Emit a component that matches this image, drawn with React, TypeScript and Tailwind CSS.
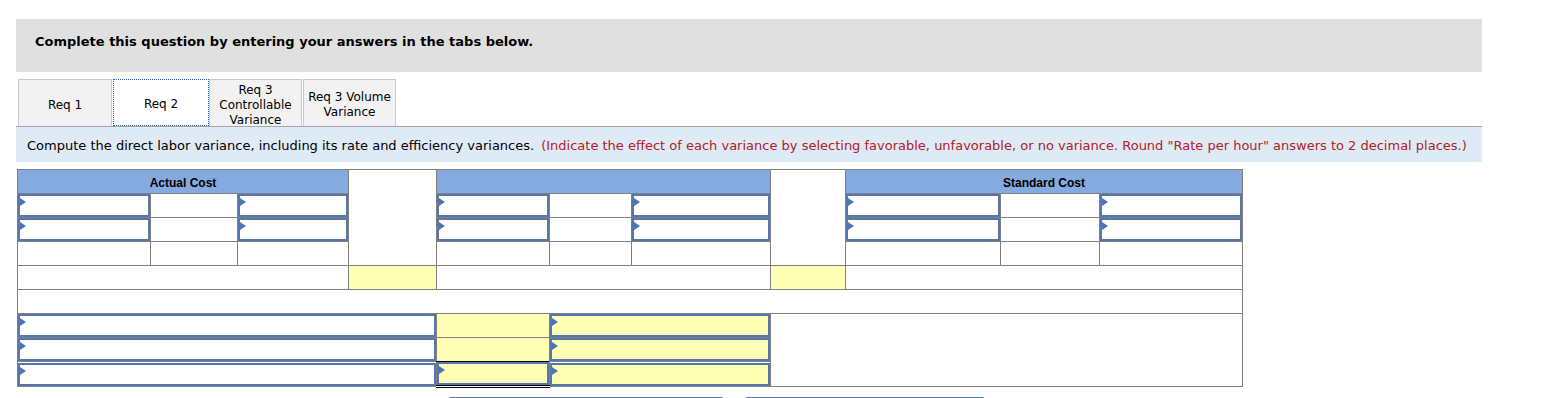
import React from 'react';

const cell = 'h-[24px] p-0 border border-[#808080]';
const yellow = 'bg-[#ffffb6]';

const Arrow = () => (
  <span className="absolute left-0 top-[2px] h-0 w-0 border-y-[4px] border-y-transparent border-l-[6px] border-l-[#4c74b8]" />
);

const InputBox = ({ bg = 'bg-white', arrow = true }: { bg?: string; arrow?: boolean }) => (
  <div className={`relative h-[23px] border-2 border-[#5577aa] ${bg}`}>{arrow && <Arrow />}</div>
);

const tabs = [
  { label: ['Req 1'], w: 'w-[94px]' },
  { label: ['Req 2'], w: 'w-[96px]', active: true },
  { label: ['Req 3', 'Controllable', 'Variance'], w: 'w-[93px]' },
  { label: ['Req 3 Volume', 'Variance'], w: 'w-[93px]' },
];

export default function App() {
  return (
    <div className="w-[1544px] h-[398px] overflow-hidden bg-white font-['DejaVu_Sans',Verdana,sans-serif] text-black">
      <div className="pt-[19px] pl-[16px] w-[1482px]">
        <div className="h-[53px] bg-[#e0e0e0] flex items-center pl-[19px] pb-[8px] text-[13px] font-bold">
          Complete this question by entering your answers in the tabs below.
        </div>

        <div className="mt-[7px] flex items-stretch h-[48px] pl-[2px] border-b border-[#a6a6a6] text-[12px] leading-[15px]">
          {tabs.map((t, i) => (
            <div
              key={i}
              className={`${t.w} flex flex-col items-center justify-center text-center pt-[4px] ${
                t.active
                  ? 'bg-white border border-dotted border-[#2160c4]'
                  : 'bg-[#f2f2f2] border border-b-0 border-[#c9c9c9] mr-[1px]'
              }`}
            >
              {t.label.map((l, j) => (
                <span key={j}>{l}</span>
              ))}
            </div>
          ))}
        </div>

        <div className="h-[35px] bg-[#dfeaf7] flex items-center pl-[11px] pt-[3px] text-[13px]">
          <span>Compute the direct labor variance, including its rate and efficiency variances.</span>
          <span className="ml-[7px] text-[#b3201f]">
            (Indicate the effect of each variance by selecting favorable, unfavorable, or no variance. Round "Rate per hour" answers to 2 decimal places.)
          </span>
        </div>
      </div>

      <div className="pl-[17px] pt-[7px]">
        <table className="table-fixed border-collapse w-[1225px] font-['Liberation_Sans',Arial,sans-serif] text-[12px]">
          <colgroup>
            <col className="w-[133px]" />
            <col className="w-[87px]" />
            <col className="w-[111px]" />
            <col className="w-[88px]" />
            <col className="w-[113px]" />
            <col className="w-[82px]" />
            <col className="w-[139px]" />
            <col className="w-[75px]" />
            <col className="w-[155px]" />
            <col className="w-[99px]" />
            <col className="w-[143px]" />
          </colgroup>
          <tbody>
            <tr>
              <td colSpan={3} className={`${cell} bg-[#84aadf] text-center font-bold pt-[3px]`}>Actual Cost</td>
              <td rowSpan={4} className={cell} />
              <td colSpan={3} className={`${cell} bg-[#84aadf]`} />
              <td rowSpan={4} className={cell} />
              <td colSpan={3} className={`${cell} bg-[#84aadf] text-center font-bold pt-[3px]`}>Standard Cost</td>
            </tr>
            {[0, 1].map((r) => (
              <tr key={r}>
                <td className={cell}><InputBox /></td>
                <td className={cell} />
                <td className={cell}><InputBox /></td>
                <td className={cell}><InputBox /></td>
                <td className={cell} />
                <td className={cell}><InputBox /></td>
                <td className={cell}><InputBox /></td>
                <td className={cell} />
                <td className={cell}><InputBox /></td>
              </tr>
            ))}
            <tr>
              <td className={cell} />
              <td className={`${cell} border-t-black`} />
              <td className={cell} />
              <td className={cell} />
              <td className={cell} />
              <td className={cell} />
              <td className={cell} />
              <td className={cell} />
              <td className={cell} />
            </tr>
            <tr>
              <td colSpan={3} className={cell} />
              <td className={`${cell} ${yellow}`} />
              <td colSpan={3} className={cell} />
              <td className={`${cell} ${yellow}`} />
              <td colSpan={3} className={cell} />
            </tr>
            <tr>
              <td colSpan={11} className={cell} />
            </tr>
            <tr>
              <td colSpan={4} className={cell}><InputBox /></td>
              <td className={`${cell} ${yellow}`} />
              <td colSpan={2} className={cell}><InputBox bg={yellow} /></td>
              <td colSpan={4} rowSpan={3} className={cell} />
            </tr>
            <tr>
              <td colSpan={4} className={cell}><InputBox /></td>
              <td className={`${cell} ${yellow}`} />
              <td colSpan={2} className={cell}><InputBox bg={yellow} /></td>
            </tr>
            <tr>
              <td colSpan={4} className={cell}><InputBox /></td>
              <td className={`${cell} border-t-black border-b-[3px] border-b-black border-double`}>
                <InputBox bg={yellow} />
              </td>
              <td colSpan={2} className={cell}><InputBox bg={yellow} /></td>
            </tr>
          </tbody>
        </table>

        <div className="mt-[9px] flex">
          <div className="ml-[431px] w-[276px] h-[20px] border-2 border-[#5577aa] rounded-[3px]" />
          <div className="ml-[21px] w-[240px] h-[20px] border-2 border-[#5577aa] rounded-[3px]" />
        </div>
      </div>
    </div>
  );
}
